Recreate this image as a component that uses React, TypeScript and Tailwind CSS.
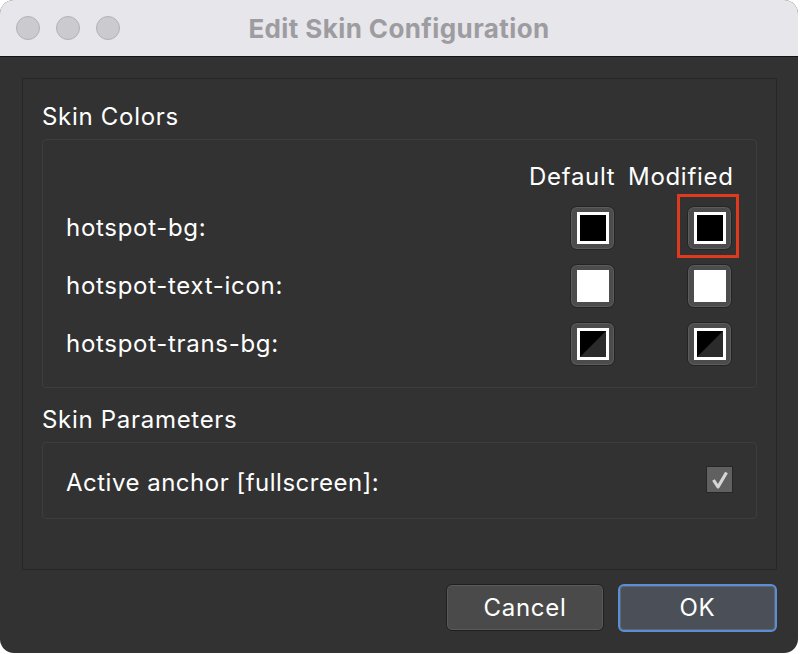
import React from "react";

type Swatch = "black" | "white" | "trans";

const rows: { name: string; color: Swatch; highlight?: boolean }[] = [
  { name: "hotspot-bg:", color: "black", highlight: true },
  { name: "hotspot-text-icon:", color: "white" },
  { name: "hotspot-trans-bg:", color: "trans" },
];

function ColorButton({ color, highlight }: { color: Swatch; highlight?: boolean }) {
  return (
    <div className="relative">
      {highlight && (
        <div className="absolute left-[-10px] top-[-12px] w-[62px] h-[64px] border-[3px] border-[#df3a1e]" />
      )}
      <div className="w-[45px] h-[44px] rounded-[7px] border border-[#242424] bg-[#4c4c4c] flex items-center justify-center shadow-[inset_0_0_0_1px_#5c5c5c]">
        {color === "white" ? (
          <div className="w-[32px] h-[32px] bg-white" />
        ) : (
          <div className="w-[32px] h-[32px] border-[3px] border-white bg-black">
            {color === "trans" && (
              <svg width="26" height="26" viewBox="0 0 26 26">
                <polygon points="26,0 26,26 0,26" fill="#2b2b2b" />
              </svg>
            )}
          </div>
        )}
      </div>
    </div>
  );
}

export default function App() {
  return (
    <div className="w-[800px] h-[654px] bg-white" style={{ fontFamily: "Inter, 'Liberation Sans', sans-serif" }}>
      <div className="w-[798px] h-[653px] rounded-[14px] overflow-hidden bg-[#323232] flex flex-col">
        {/* title bar */}
        <div className="relative h-[57px] bg-[#e7e6eb] border-b border-[#141414] flex items-center shrink-0">
          <div className="flex gap-[16px] pl-[16px]">
            <div className="w-[24px] h-[24px] rounded-full bg-[#cbcacf] border border-[#b3b2b7]" />
            <div className="w-[24px] h-[24px] rounded-full bg-[#cbcacf] border border-[#b3b2b7]" />
            <div className="w-[24px] h-[24px] rounded-full bg-[#cbcacf] border border-[#b3b2b7]" />
          </div>
          <div className="absolute inset-0 flex items-center justify-center text-[26px] font-bold text-[#9d9ca1] tracking-[0.4px]">
            Edit Skin Configuration
          </div>
        </div>

        {/* body */}
        <div className="flex-1 pt-[21px] pl-[22px] pr-[21px] text-white tracking-[0.7px]">
          <div className="h-[492px] border border-[#262626] pt-[24px] pl-[19px] pr-[19px]">
            <div className="text-[24px] leading-[28px]">Skin Colors</div>
            <div className="mt-[8px] h-[249px] border border-[#3d3d3d] rounded-[4px] pt-[22px] pl-[23px] pr-[24px]">
              <div className="flex items-center h-[30px] text-[24px] justify-end gap-[13px]">
                <div className="w-[86px] text-right">Default</div>
                <div className="w-[104px] text-right">Modified</div>
              </div>
              <div className="flex flex-col gap-[14px] mt-[14px]">
                {rows.map((r) => (
                  <div key={r.name} className="flex items-center h-[44px] gap-[13px] text-[24px]">
                    <div className="flex-1">{r.name}</div>
                    <div className="w-[86px] flex justify-end">
                      <ColorButton color={r.color} />
                    </div>
                    <div className="w-[104px] flex justify-end">
                      <ColorButton color={r.color} highlight={r.highlight} />
                    </div>
                  </div>
                ))}
              </div>
            </div>

            <div className="text-[24px] leading-[28px] mt-[18px]">Skin Parameters</div>
            <div className="mt-[8px] h-[77px] border border-[#3d3d3d] rounded-[4px] pl-[23px] pr-[23px] flex items-center justify-between">
              <div className="text-[24px] mt-[4px] tracking-[0.5px]">Active anchor [fullscreen]:</div>
              <div className="w-[27px] h-[27px] bg-[#606060] border border-[#262626] flex items-center justify-center mt-[-2px]">
                <svg width="20" height="20" viewBox="0 0 20 20">
                  <path d="M3.5 10 L8 17 L16.5 2.5" stroke="#d6d6d6" strokeWidth="3.2" fill="none" strokeLinejoin="round" />
                </svg>
              </div>
            </div>
          </div>

          <div className="flex justify-end gap-[14px] mt-[14px]">
            <button className="w-[158px] h-[47px] rounded-[6px] bg-[#4a4a4a] border border-[#1f1f1f] shadow-[inset_0_0_0_1px_#5a5a5a] text-[24px] text-white">
              Cancel
            </button>
            <button className="w-[159px] h-[48px] rounded-[6px] bg-[#4b5058] border-2 border-[#5a8fd8] shadow-[inset_0_0_0_1px_#60656d] text-[24px] text-white">
              OK
            </button>
          </div>
        </div>
      </div>
    </div>
  );
}
